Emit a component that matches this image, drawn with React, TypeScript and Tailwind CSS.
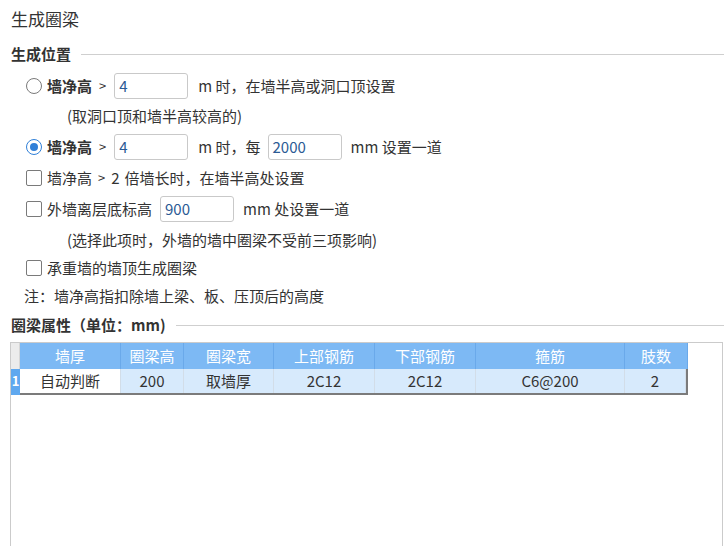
import React from "react";

const FONT = { fontFamily: '"Noto Sans CJK SC", "Noto Sans", sans-serif' };

function Radio({ checked }: { checked?: boolean }) {
  return (
    <span
      className={`w-[16px] h-[16px] rounded-full border bg-white flex items-center justify-center shrink-0 ${
        checked ? "border-[#2f7fd8]" : "border-[#7a7a7a]"
      }`}
    >
      {checked && <span className="w-[8px] h-[8px] rounded-full bg-[#2f7fd8]" />}
    </span>
  );
}

function Check() {
  return <span className="w-[16px] h-[16px] rounded-[2px] border border-[#7a7a7a] bg-white shrink-0" />;
}

function Field({ value }: { value: string }) {
  return (
    <span className="w-[74px] h-[26px] border border-[#c9c9c9] rounded-[3px] bg-white flex items-center px-[4px] text-[#2b5a94] text-[15px]">
      {value}
    </span>
  );
}

function SectionTitle({ text }: { text: string }) {
  return (
    <div className="flex items-center h-full">
      <span className="font-bold text-[15px] text-[#333] pl-[11px] pr-[10px]">{text}</span>
      <span className="flex-1 h-px bg-[#cfcfcf]" />
    </div>
  );
}

const cols = [
  { name: "墙厚", w: 101, v: "自动判断" },
  { name: "圈梁高", w: 63, v: "200" },
  { name: "圈梁宽", w: 90, v: "取墙厚" },
  { name: "上部钢筋", w: 101, v: "2C12" },
  { name: "下部钢筋", w: 101, v: "2C12" },
  { name: "箍筋", w: 149, v: "C6@200" },
  { name: "肢数", w: 63, v: "2" },
];

export default function App() {
  return (
    <div className="w-[724px] h-[546px] bg-white overflow-hidden text-[15px] text-[#333]" style={FONT}>
      <div className="h-[38px] flex items-center pl-[11px] text-[17px] text-[#333]">生成圈梁</div>

      <div className="h-[32px]">
        <SectionTitle text="生成位置" />
      </div>

      {/* row 1 */}
      <div className="h-[32px] flex items-center pl-[26px]">
        <Radio />
        <span className="ml-[5px] font-bold">墙净高</span>
        <span className="ml-[7px] text-[13px]">&gt;</span>
        <span className="ml-[8px]">
          <Field value="4" />
        </span>
        <span className="ml-[10px]">m 时，在墙半高或洞口顶设置</span>
      </div>

      {/* row 2 */}
      <div className="h-[29px] flex items-center pl-[67px]">(取洞口顶和墙半高较高的)</div>

      {/* row 3 */}
      <div className="h-[32px] flex items-center pl-[26px]">
        <Radio checked />
        <span className="ml-[5px] font-bold">墙净高</span>
        <span className="ml-[7px] text-[13px]">&gt;</span>
        <span className="ml-[8px]">
          <Field value="4" />
        </span>
        <span className="ml-[10px]">m 时，每</span>
        <span className="ml-[7px]">
          <Field value="2000" />
        </span>
        <span className="ml-[9px]">mm 设置一道</span>
      </div>

      {/* row 4 */}
      <div className="h-[30px] flex items-center pl-[26px]">
        <Check />
        <span className="ml-[5px]">墙净高</span>
        <span className="ml-[6px] text-[13px]">&gt;</span>
        <span className="ml-[6px]">2</span>
        <span className="ml-[5px]">倍墙长时，在墙半高处设置</span>
      </div>

      {/* row 5 */}
      <div className="h-[32px] flex items-center pl-[26px]">
        <Check />
        <span className="ml-[5px]">外墙离层底标高</span>
        <span className="ml-[8px]">
          <Field value="900" />
        </span>
        <span className="ml-[9px]">mm 处设置一道</span>
      </div>

      {/* row 6 */}
      <div className="h-[30px] flex items-center pl-[67px]">(选择此项时，外墙的墙中圈梁不受前三项影响)</div>

      {/* row 7 */}
      <div className="h-[26px] flex items-center pl-[26px]">
        <Check />
        <span className="ml-[5px]">承重墙的墙顶生成圈梁</span>
      </div>

      {/* row 8 */}
      <div className="h-[30px] flex items-center pl-[24px]">注：墙净高指扣除墙上梁、板、压顶后的高度</div>

      <div className="h-[28px]">
        <SectionTitle text="圈梁属性（单位：mm)" />
      </div>

      {/* table */}
      <div className="mt-[3px] ml-[10px] w-[713px] h-[220px] border border-[#cbcbcb] bg-white">
        <div className="flex h-[26px] text-[15px]">
          <div className="w-[9px] bg-[#ececec] border-r border-[#d6d6d6]" />
          {cols.map((c) => (
            <div
              key={c.name}
              className="bg-[#7db9f4] text-white flex items-center justify-center border-r border-[#6aa9ea]"
              style={{ width: c.w }}
            >
              {c.name}
            </div>
          ))}
        </div>
        <div className="flex">
          <div className="w-[9px] h-[26px] bg-[#5fa8ef] text-white text-[13px] font-bold flex items-start pt-[2px] justify-center">
            1
          </div>
          <div className="flex border-b-2 border-r-2 border-[#7b7b7b]">
            {cols.map((c, i) => (
              <div
                key={c.name}
                className={`h-[24px] flex items-center justify-center border-r border-[#d2dde8] ${
                  i === 0 ? "bg-white" : "bg-[#d7eafc]"
                }`}
                style={{ width: i === cols.length - 1 ? c.w - 2 : c.w }}
              >
                {c.v}
              </div>
            ))}
          </div>
        </div>
      </div>
    </div>
  );
}
